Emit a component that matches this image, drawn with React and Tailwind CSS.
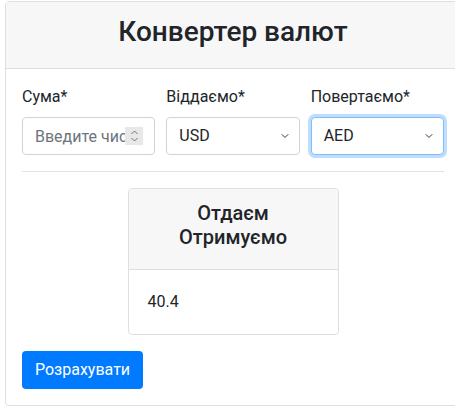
import { ChevronDown } from "lucide-react";

const fields = [
  { label: "Віддаємо*", value: "USD", focused: false },
  { label: "Повертаємо*", value: "AED", focused: true },
];

const SelectField = ({ label, value, focused }) => (
  <div className="flex flex-col">
    <label className="mb-2 leading-6">{label}</label>
    <div className="relative">
      <div
        className={
          focused
            ? "h-[38px] rounded border border-[#80bdff] bg-white pl-3 leading-[36px] shadow-[0_0_0_3px_rgba(0,123,255,0.25)]"
            : "h-[38px] rounded border border-[#ced4da] bg-white pl-3 leading-[36px]"
        }
      >
        {value}
      </div>
      <ChevronDown
        size={12}
        strokeWidth={2}
        className="absolute right-[9px] top-[13px] text-[#343a40]"
      />
    </div>
  </div>
);

export default function App() {
  return (
    <div className="h-[418px] w-[455px] overflow-hidden bg-white font-['Roboto',sans-serif] text-[16px] text-[#212529]">
      <div className="ml-[5px] mt-[1px] w-[456px] rounded border border-[#dfdfdf]">
        <div className="flex h-[67px] items-center justify-center border-b border-[#dfdfdf] bg-[#f7f7f7] pb-[6px] text-[28px] font-medium">
          Конвертер валют
        </div>
        <div className="px-4 pt-4 pb-4">
          <div className="grid grid-cols-3 gap-[11px]">
            <div className="flex flex-col">
              <label className="mb-2 leading-6">Сума*</label>
              <div className="relative">
                <input
                  type="text"
                  placeholder="Введите число"
                  className="h-[38px] w-full rounded border border-[#ced4da] pl-3 pr-[29px] text-[16px] placeholder:text-[#6c757d] outline-none"
                />
                <div className="absolute right-[12px] top-[10px] flex h-[18px] w-[18px] items-center justify-center bg-[#e8e8e8]">
                  <svg width="9" height="14" viewBox="0 0 9 14" fill="none" stroke="#6c757d" strokeWidth="1">
                    <path d="M1.5 5 L4.5 2 L7.5 5" />
                    <path d="M1.5 9 L4.5 12 L7.5 9" />
                  </svg>
                </div>
              </div>
            </div>
            {fields.map((f) => (
              <SelectField key={f.label} {...f} />
            ))}
          </div>
          <hr className="mt-4 border-t border-[#e2e2e2]" />
          <div className="mt-4 flex justify-center">
            <div className="w-[211px] overflow-hidden rounded border border-[#dfdfdf]">
              <div className="border-b border-[#dfdfdf] bg-[#f7f7f7] pt-3 pb-5 text-center text-[20px] font-medium leading-6">
                Отдаєм
                <br />
                Отримуємо
              </div>
              <div className="px-[19px] py-5 leading-6">40.4</div>
            </div>
          </div>
          <button className="mt-4 h-[38px] rounded bg-[#007bff] px-[13px] leading-6 text-white">
            Розрахувати
          </button>
        </div>
      </div>
    </div>
  );
}
